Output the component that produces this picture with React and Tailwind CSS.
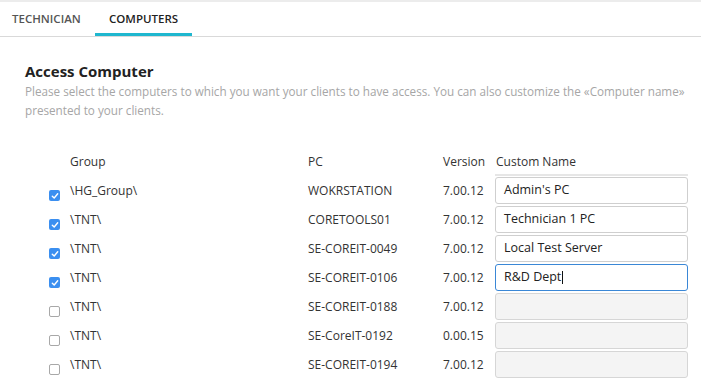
const rows = [
  { checked: true, group: "\\HG_Group\\", pc: "WOKRSTATION", version: "7.00.12", name: "Admin's PC" },
  { checked: true, group: "\\TNT\\", pc: "CORETOOLS01", version: "7.00.12", name: "Technician 1 PC" },
  { checked: true, group: "\\TNT\\", pc: "SE-COREIT-0049", version: "7.00.12", name: "Local Test Server" },
  { checked: true, group: "\\TNT\\", pc: "SE-COREIT-0106", version: "7.00.12", name: "R&D Dept", focused: true },
  { checked: false, group: "\\TNT\\", pc: "SE-COREIT-0188", version: "7.00.12", name: "" },
  { checked: false, group: "\\TNT\\", pc: "SE-CoreIT-0192", version: "0.00.15", name: "" },
  { checked: false, group: "\\TNT\\", pc: "SE-COREIT-0194", version: "7.00.12", name: "" },
];

const Checkbox = ({ checked }) =>
  checked ? (
    <span className="flex h-[11px] w-[11px] items-center justify-center rounded-[2px] bg-[#3b8ff0]">
      <svg width="8" height="8" viewBox="0 0 8 8" fill="none">
        <path d="M1.3 4.2 L3.2 6 L6.7 1.8" stroke="white" strokeWidth="1.4" strokeLinecap="round" strokeLinejoin="round" />
      </svg>
    </span>
  ) : (
    <span className="block h-[11px] w-[11px] rounded-[2px] border border-[#a8a8a8] bg-white" />
  );

const EmptyInput = () => (
  <div className="h-[27px] w-[193px] rounded-[3px] border border-[#d6d6d6] bg-[#f4f4f4]" />
);

const Row = ({ row }) => (
  <div className="flex h-[29px] items-center text-[12px] text-[#333]">
    <div className="w-[49px]" />
    <div className="mt-[10px] w-[21px]">
      <Checkbox checked={row.checked} />
    </div>
    <div className="w-[238px]">{row.group}</div>
    <div className="w-[135px]">{row.pc}</div>
    <div className="w-[52px]">{row.version}</div>
    {row.name ? (
      <div
        className={
          "flex h-[27px] w-[193px] items-center rounded-[3px] border bg-white pl-[8px] text-[12.5px] text-[#222] " +
          (row.focused ? "border-[#3a87d6]" : "border-[#cfcfcf]")
        }
      >
        <span>{row.name}</span>
        {row.focused && <span className="ml-[1px] h-[13px] w-[1px] bg-[#111]" />}
      </div>
    ) : (
      <EmptyInput />
    )}
  </div>
);

const App = () => {
  return (
    <div className="h-screen overflow-hidden bg-white" style={{ fontFamily: '"Open Sans", "Noto Sans", sans-serif' }}>
      <div className="h-[2px] bg-[#ececec]" />
      <div className="flex h-[35px] border-b border-[#d9d9d9] text-[11.5px] font-semibold">
        <div className="flex w-[95px] items-center pl-3 text-[#555]">TECHNICIAN</div>
        <div className="flex w-[97px] items-center border-b-[3px] border-[#1fb7cf] pl-[14px] pt-[3px] text-[#222]">COMPUTERS</div>
      </div>

      <div className="pl-[25px] pt-[24px]">
        <h2 className="text-[15px] font-bold leading-[20px] text-[#222]">Access Computer</h2>
        <p className="mt-[1px] w-[668px] text-[11.7px] leading-[19px] text-[#a6a6a6]">
          Please select the computers to which you want your clients to have access. You can also customize the «Computer name» presented to your clients.
        </p>
      </div>

      <div className="mt-[31px]">
        <div className="flex h-[25px] text-[12px] text-[#333]">
          <div className="w-[70px]" />
          <div className="w-[238px] pt-[2px]">Group</div>
          <div className="w-[135px] pt-[2px]">PC</div>
          <div className="w-[52px] pt-[2px]">Version</div>
          <div className="flex w-[193px] flex-col justify-between">
            <div className="pt-[2px] pl-[1px]">Custom Name</div>
            <div className="h-[2px] bg-[#e6e6e6]" />
          </div>
        </div>
        {rows.map((r) => (
          <Row key={r.pc} row={r} />
        ))}
        <div className="flex pt-[1px]">
          <div className="w-[495px]" />
          <EmptyInput />
        </div>
      </div>
    </div>
  );
};

export default App;
